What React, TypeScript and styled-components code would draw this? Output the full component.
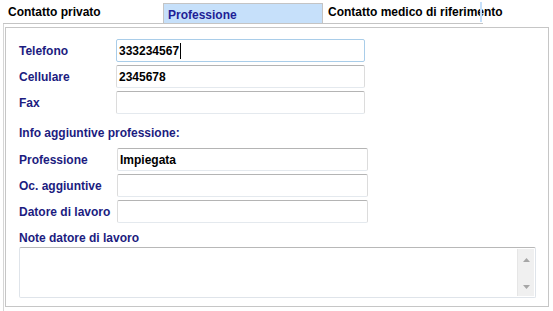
import React from "react";
import styled, { createGlobalStyle } from "styled-components";

const Global = createGlobalStyle`
  html, body { margin: 0; padding: 0; background: #ffffff; }
  body { font-family: "Liberation Sans", Arial, sans-serif; }
  * { box-sizing: border-box; }
`;

const Page = styled.div`
  width: 553px;
  height: 311px;
  background: #fff;
  font-family: "Liberation Sans", Arial, sans-serif;
  font-size: 12px;
  font-weight: bold;
  overflow: hidden;
`;

const TabBar = styled.div`
  display: flex;
  align-items: flex-end;
  height: 24px;
  padding-left: 3px;
`;

const Tab = styled.div<{ $active?: boolean; $edge?: boolean }>`
  position: relative;
  width: 160px;
  height: ${(p) => (p.$active ? "21px" : "24px")};
  padding-left: ${(p) => (p.$active ? "4px" : "5px")};
  padding-top: ${(p) => (p.$active ? "4px" : "5px")};
  line-height: 14px;
  white-space: nowrap;
  color: ${(p) => (p.$active ? "#1e1e96" : "#000")};
  background: ${(p) => (p.$active ? "#c6e0fa" : "#fff")};
  border-bottom: 1px solid #c4c4c4;
  border-top: ${(p) => (p.$active ? "1px solid #c4c4c4" : "none")};
  border-left: ${(p) => (p.$active ? "1px solid #c4c4c4" : "none")};
  border-right: ${(p) => (p.$active ? "1px solid #c4c4c4" : "none")};
  ${(p) =>
    p.$edge &&
    `&::after {
      content: "";
      position: absolute;
      right: 1px;
      top: 2px;
      width: 2px;
      height: 20px;
      background: #c6e0fa;
    }`}
`;

const Frame = styled.div`
  margin-left: 3px;
  padding: 3px 0 0 1px;
  border-left: 1px solid #d6d6d6;
  height: 287px;
`;

const Panel = styled.div`
  width: 544px;
  height: 280px;
  border: 1px solid #c6c6c6;
  padding: 11px 0 0 13px;
  display: flex;
  flex-direction: column;
`;

const FieldGrid = styled.div<{ $label: number; $input: number }>`
  display: grid;
  grid-template-columns: ${(p) => p.$label}px ${(p) => p.$input}px;
  grid-auto-rows: 23px;
  row-gap: 3px;
  align-items: center;
`;

const Label = styled.div<{ $mt?: number }>`
  color: #1c1c80;
  line-height: 14px;
  white-space: nowrap;
  margin-top: ${(p) => p.$mt ?? 0}px;
`;

const Input = styled.div<{ $focus?: boolean }>`
  height: 23px;
  border: 1px solid ${(p) => (p.$focus ? "#a9cde9" : "#dcdcdc")};
  border-top-color: ${(p) => (p.$focus ? "#a9cde9" : "#b4b4b4")};
  border-bottom-color: ${(p) => (p.$focus ? "#a9cde9" : "#e4e9ee")};
  border-radius: 2px;
  padding-left: 2px;
  display: flex;
  align-items: center;
  color: #000;
  background: #fff;
`;

const Caret = styled.span`
  display: inline-block;
  width: 1px;
  height: 16px;
  background: #000;
  margin-left: 1px;
`;

const TextArea = styled.div`
  margin-top: 2px;
  width: 517px;
  height: 51px;
  border: 1px solid #dfe4ea;
  border-top-color: #b8b8b8;
  border-radius: 2px;
  display: flex;
  justify-content: flex-end;
  padding: 1px;
`;

const ScrollBar = styled.div`
  width: 17px;
  height: 100%;
  background: #f0f0f0;
  border-left: 1px solid #e6e6e6;
  display: flex;
  flex-direction: column;
  justify-content: space-between;
  align-items: center;
  padding: 9px 0 7px;
`;

const Arrow = ({ down }: { down?: boolean }) => (
  <svg width="7" height="4" viewBox="0 0 7 4">
    <path d={down ? "M0 0 H7 L3.5 4 Z" : "M0 4 H7 L3.5 0 Z"} fill="#a6a6a6" />
  </svg>
);

export default function App() {
  return (
    <Page>
      <Global />
      <TabBar>
        <Tab>Contatto privato</Tab>
        <Tab $active>Professione</Tab>
        <Tab $edge>Contatto medico di riferimento</Tab>
      </TabBar>
      <Frame>
        <Panel>
          <FieldGrid $label={97} $input={249}>
            <Label>Telefono</Label>
            <Input $focus>
              333234567
              <Caret />
            </Input>
            <Label>Cellulare</Label>
            <Input>2345678</Input>
            <Label>Fax</Label>
            <Input />
          </FieldGrid>
          <Label $mt={12}>Info aggiuntive professione:</Label>
          <FieldGrid $label={98} $input={251} style={{ marginTop: 8 }}>
            <Label>Professione</Label>
            <Input>Impiegata</Input>
            <Label>Oc. aggiuntive</Label>
            <Input />
            <Label>Datore di lavoro</Label>
            <Input />
          </FieldGrid>
          <Label $mt={8}>Note datore di lavoro</Label>
          <TextArea>
            <ScrollBar>
              <Arrow />
              <Arrow down />
            </ScrollBar>
          </TextArea>
        </Panel>
      </Frame>
    </Page>
  );
}
